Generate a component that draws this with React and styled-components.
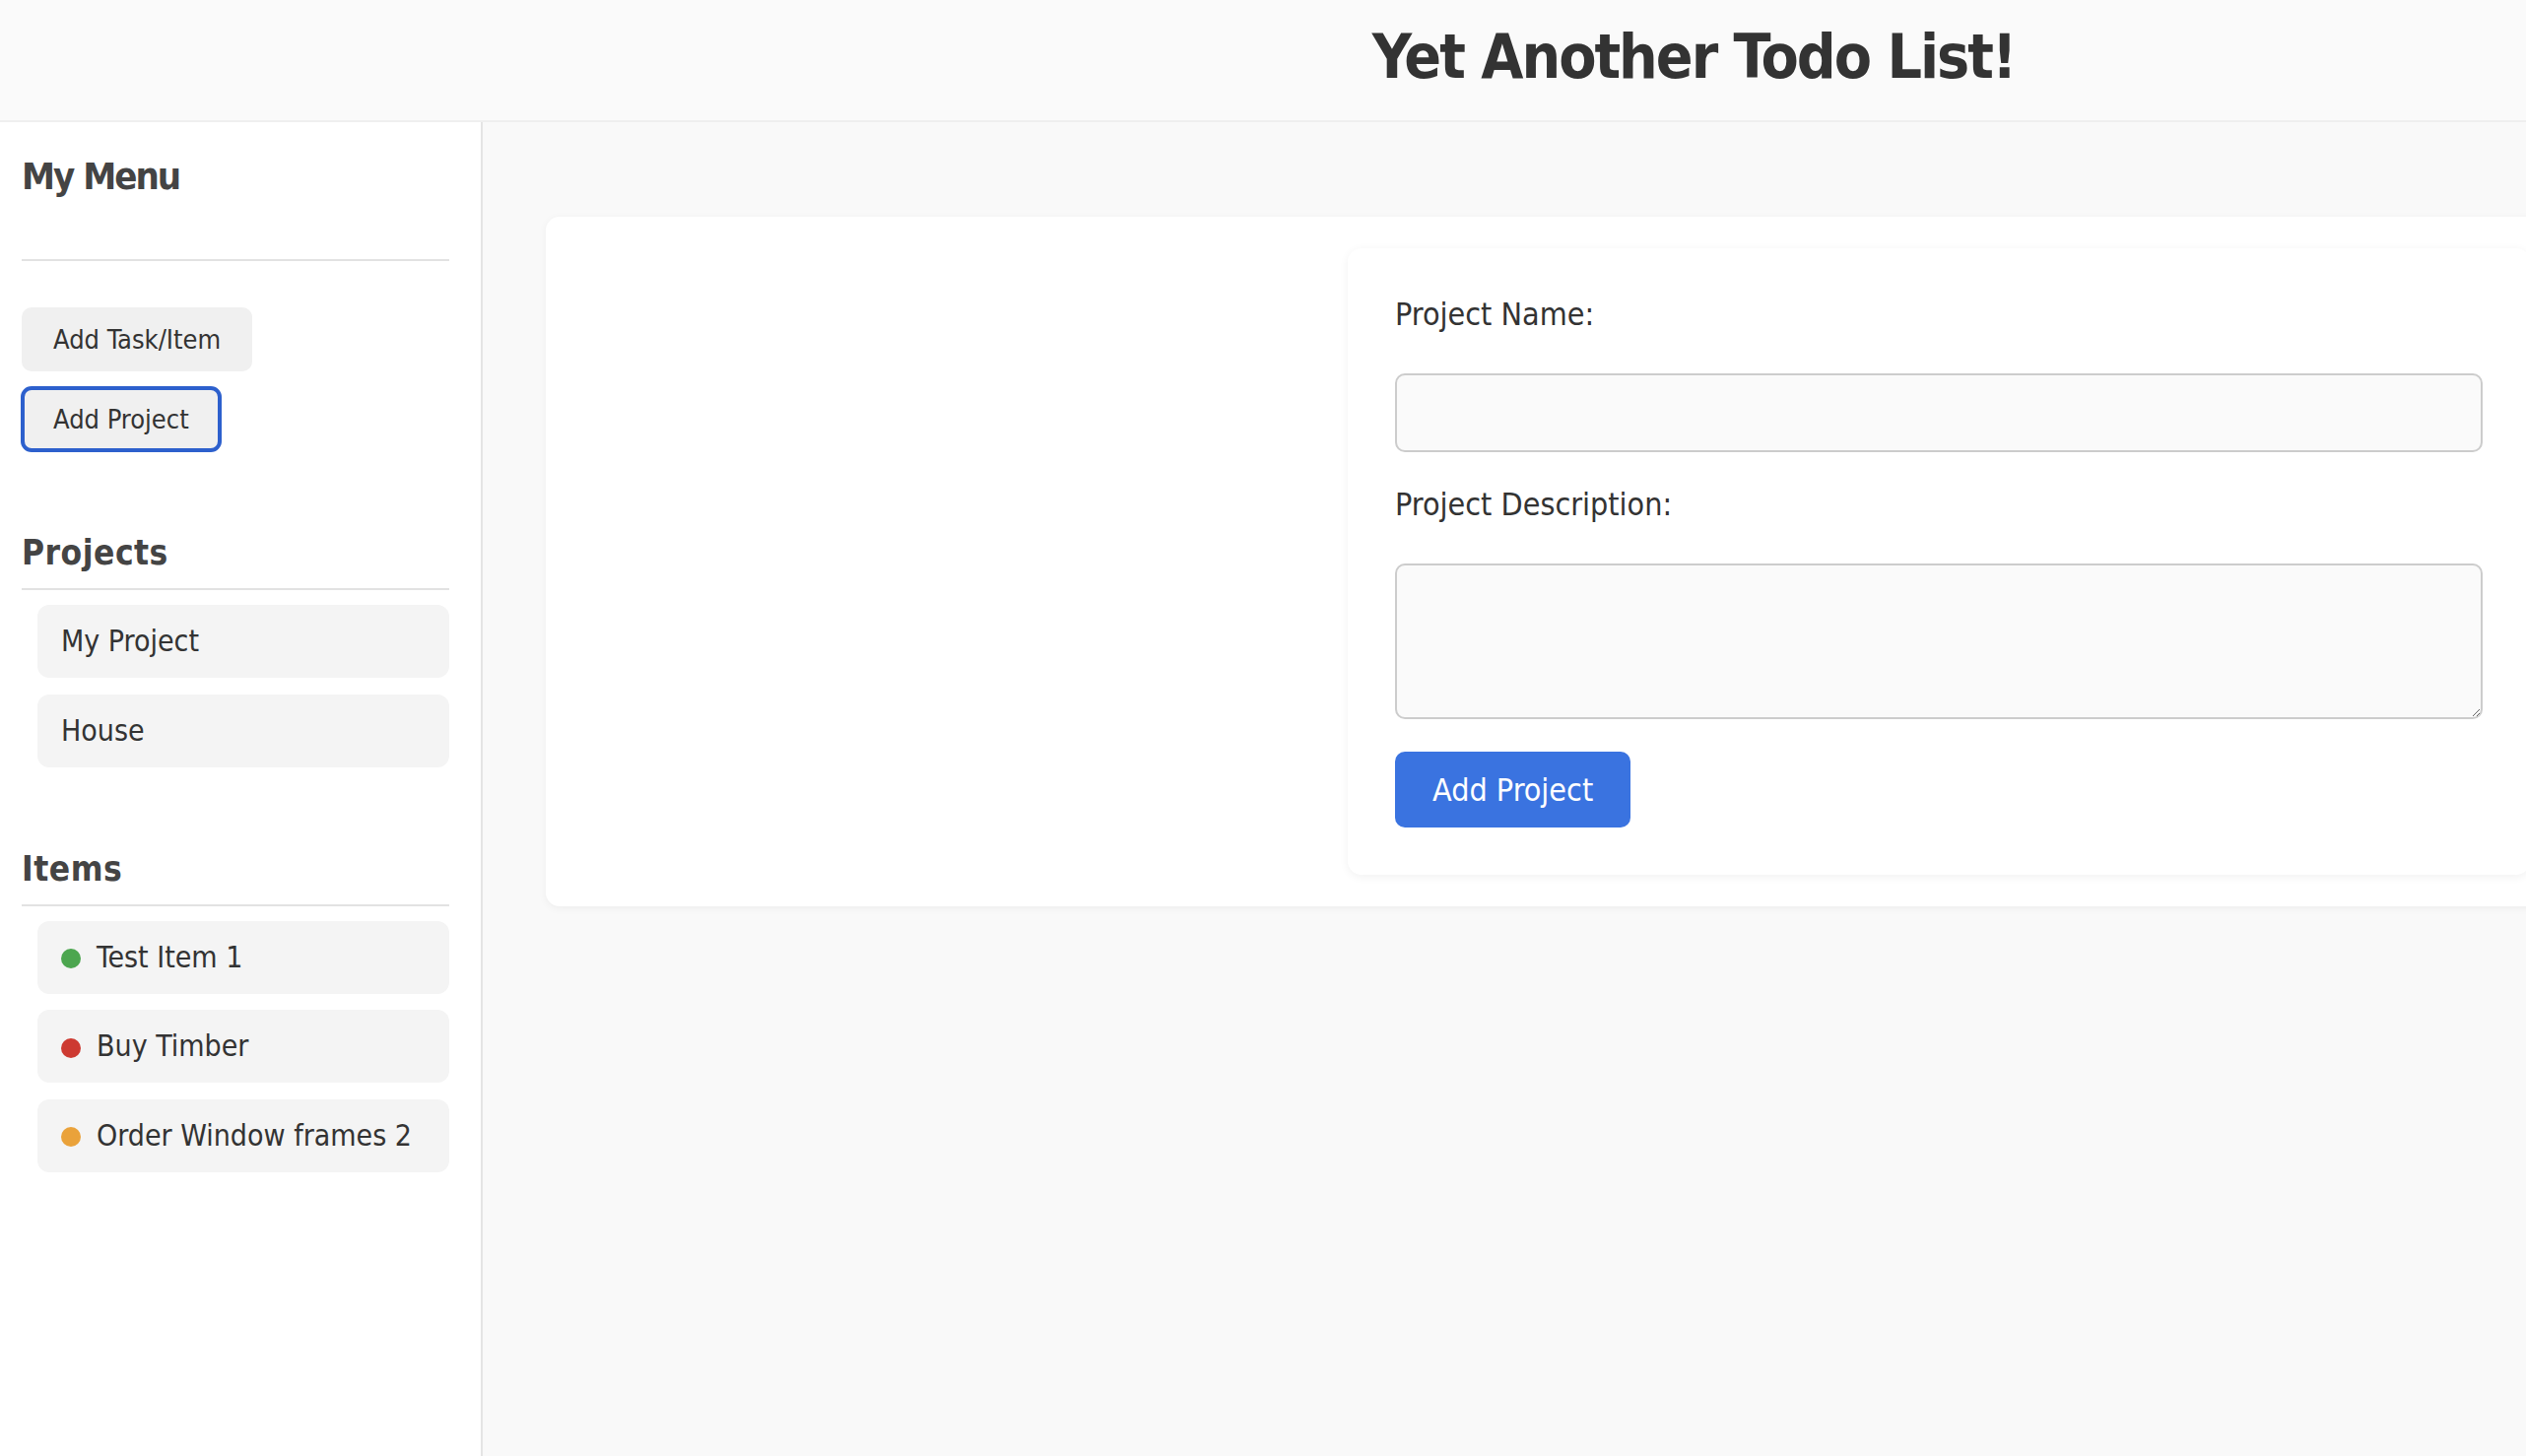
import React from 'react'
import styled, { createGlobalStyle } from 'styled-components'

const projects = ['My Project', 'House']

const items = [
  { title: 'Test Item 1', priority: 'low' },
  { title: 'Buy Timber', priority: 'high' },
  { title: 'Order Window frames 2', priority: 'medium' },
]

const priorityColours = {
  low: '#4ca64f',
  high: '#cd3a31',
  medium: '#eaa23a',
}

const App = () => {
  return (
    <>
      <GlobalStyle />
      <Page>
        <Header>
          <Title>Yet Another Todo List!</Title>
        </Header>
        <Body>
          <Sidebar>
            <MenuTitle>My Menu</MenuTitle>
            <MenuButtons>
              <MenuButton>Add Task/Item</MenuButton>
              <MenuButton focused>Add Project</MenuButton>
            </MenuButtons>

            <Section>
              <SectionTitle>Projects</SectionTitle>
              <List>
                {projects.map(name => (
                  <ListItem key={name}>{name}</ListItem>
                ))}
              </List>
            </Section>

            <Section>
              <SectionTitle>Items</SectionTitle>
              <List>
                {items.map(item => (
                  <ListItem key={item.title}>
                    <Dot colour={priorityColours[item.priority]} />
                    {item.title}
                  </ListItem>
                ))}
              </List>
            </Section>
          </Sidebar>

          <Main>
            <Card>
              <Details />
              <FormCard onSubmit={e => e.preventDefault()}>
                <Label htmlFor="project-name">Project Name:</Label>
                <TextInput id="project-name" type="text" />
                <Label htmlFor="project-description">Project Description:</Label>
                <TextArea id="project-description" />
                <SubmitButton type="submit">Add Project</SubmitButton>
              </FormCard>
            </Card>
          </Main>
        </Body>
      </Page>
    </>
  )
}

export default App

const GlobalStyle = createGlobalStyle`
  * {
    box-sizing: border-box;
  }
  html, body {
    margin: 0;
    height: 100%;
  }
  body {
    font-family: "DejaVu Sans Condensed", "DejaVu Sans", sans-serif;
    color: #333;
    background: #f9f9f9;
    overflow: hidden;
  }
  #root {
    height: 100%;
  }
`

const Page = styled.div`
  display: grid;
  grid-template-rows: 124px 1fr;
  height: 100vh;
`

const Header = styled.header`
  display: flex;
  justify-content: center;
  align-items: flex-start;
  padding: 22px 0 0 838px;
  background: #fafafa;
  border-bottom: 2px solid #efefef;
`

const Title = styled.h1`
  margin: 0;
  font-size: 62px;
  line-height: 72px;
  font-weight: bold;
  letter-spacing: -2px;
  color: #333;
`

const Body = styled.div`
  display: flex;
  min-height: 0;
`

const Sidebar = styled.aside`
  width: 490px;
  flex-shrink: 0;
  padding: 32px 32px 0 22px;
  background: #fff;
  border-right: 2px solid #e4e4e4;
`

const MenuTitle = styled.h2`
  margin: 0;
  padding-bottom: 61px;
  font-size: 38px;
  line-height: 46px;
  letter-spacing: -2px;
  color: #444;
  border-bottom: 2px solid #e2e2e2;
`

const MenuButtons = styled.div`
  display: flex;
  flex-direction: column;
  align-items: flex-start;
  gap: 16px;
  margin-top: 47px;
`

const MenuButton = styled.button`
  height: 65px;
  padding: 0 32px;
  border: none;
  border-radius: 10px;
  background: #f0f0f0;
  color: #333;
  font-family: inherit;
  font-size: 27px;
  cursor: pointer;
  outline: ${({ focused }) => (focused ? '4px solid #2d60cd' : 'none')};
  outline-offset: -3px;
`

const Section = styled.section`
  margin-top: 82px;
`

const SectionTitle = styled.h3`
  margin: 0;
  padding-bottom: 15px;
  font-size: 35px;
  line-height: 42px;
  letter-spacing: 0.5px;
  color: #444;
  border-bottom: 2px solid #e2e2e2;
`

const List = styled.ul`
  display: flex;
  flex-direction: column;
  gap: 16.5px;
  margin: 15px 0 0 16px;
  padding: 0;
  list-style: none;
`

const ListItem = styled.li`
  height: 74px;
  padding: 0 24px;
  line-height: 74px;
  border-radius: 12px;
  background: #f4f4f4;
  color: #333;
  font-size: 30px;
  white-space: nowrap;
  cursor: pointer;
`

const Dot = styled.span`
  display: inline-block;
  width: 20px;
  height: 20px;
  margin-right: 16px;
  border-radius: 50%;
  background: ${({ colour }) => colour};
  vertical-align: middle;
`

const Main = styled.main`
  flex: 1;
  min-width: 0;
  padding: 96px 0 0 64px;
  background: #f9f9f9;
  overflow: hidden;
`

const Card = styled.div`
  display: grid;
  grid-template-columns: 782px 1200px;
  width: max-content;
  padding: 32px;
  border-radius: 14px;
  background: #fff;
  box-shadow: 0 2px 8px rgba(0, 0, 0, 0.05);
`

const Details = styled.div``

const FormCard = styled.form`
  display: flex;
  flex-direction: column;
  align-items: stretch;
  padding: 48px;
  border-radius: 14px;
  background: #fff;
  box-shadow: 0 2px 10px rgba(0, 0, 0, 0.06);
`

const Label = styled.label`
  margin-bottom: 40px;
  font-size: 32px;
  line-height: 39px;
  color: #333;
`

const fieldStyles = `
  display: block;
  width: 100%;
  margin: 0 0 34px;
  border: 2px solid #ccc;
  border-radius: 10px;
  background: #fafafa;
  font-family: inherit;
  font-size: 28px;
  color: #333;
`

const TextInput = styled.input`
  ${fieldStyles}
  height: 80px;
  padding: 0 16px;
`

const TextArea = styled.textarea`
  ${fieldStyles}
  height: 158px;
  margin-bottom: 33px;
  padding: 12px 16px;
`

const SubmitButton = styled.button`
  align-self: flex-start;
  height: 77px;
  padding: 0 38px;
  border: none;
  border-radius: 10px;
  background: #3a73e0;
  color: #fff;
  font-family: inherit;
  font-size: 32px;
  cursor: pointer;
`
